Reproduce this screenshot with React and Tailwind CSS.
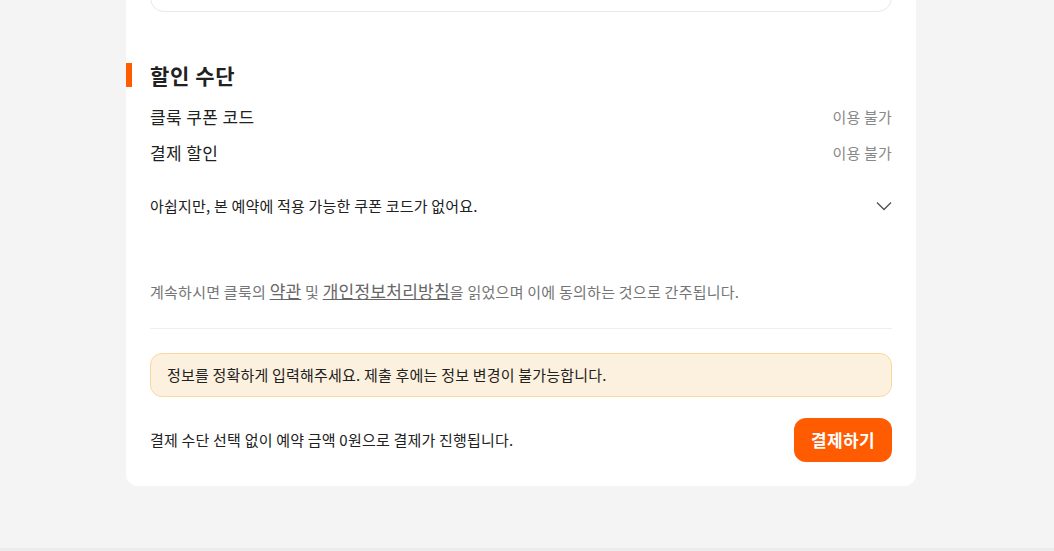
export default function App() {
  const font = { fontFamily: '"Noto Sans CJK KR", "Noto Sans", sans-serif' };
  return (
    <div className="min-h-[551px] bg-[#f4f4f4]" style={font}>
      <div className="ml-[126px] w-[790px] bg-white rounded-b-[12px] px-[24px] pb-[24px] overflow-hidden">
        <div className="-mt-[40px] h-[52px] rounded-[14px] border border-[#e8e8e8]"></div>

        <div className="mt-[51px] -ml-[24px] flex items-center h-[24px]">
          <div className="w-[6px] h-[24px] bg-[#ff5b00]"></div>
          <h2 className="ml-[18px] text-[21px] tracking-[0.6px] leading-[23px] font-bold text-[#212121]">할인 수단</h2>
        </div>

        <div className="mt-[18px] flex items-center justify-between h-[24px]">
          <span className="text-[17px] tracking-[0.4px] leading-[24px] text-[#212121]">클룩 쿠폰 코드</span>
          <span className="text-[15px] tracking-[0.2px] leading-[20px] text-[#888888]">이용 불가</span>
        </div>
        <div className="mt-[12px] flex items-center justify-between h-[24px]">
          <span className="text-[17px] tracking-[0.4px] leading-[24px] text-[#212121]">결제 할인</span>
          <span className="text-[15px] tracking-[0.2px] leading-[20px] text-[#888888]">이용 불가</span>
        </div>

        <div className="mt-[31px] flex items-center justify-between h-[20px]">
          <span className="text-[15px] tracking-[0.2px] leading-[20px] text-[#212121]">아쉽지만, 본 예약에 적용 가능한 쿠폰 코드가 없어요.</span>
          <svg width="16" height="16" viewBox="0 0 16 16" fill="none">
            <path d="M1 4.5L8 11.5L15 4.5" stroke="#555555" strokeWidth="1.4" />
          </svg>
        </div>

        <p className="mt-[63px] text-[15px] tracking-[0.25px] leading-[24px] text-[#757575]">
          계속하시면 클룩의 <a className="text-[17px] underline text-[#666666]">약관</a> 및{" "}
          <a className="text-[17px] underline text-[#666666]">개인정보처리방침</a>을 읽었으며 이에 동의하는 것으로 간주됩니다.
        </p>

        <div className="mt-[24px] h-px bg-[#eeeeee]"></div>

        <div className="mt-[24px] h-[44px] rounded-[12px] border border-[#f8d89c] bg-[#fcf1de] flex items-center px-[16px]">
          <span className="text-[15px] tracking-[0.2px] leading-[20px] text-[#212121]">정보를 정확하게 입력해주세요. 제출 후에는 정보 변경이 불가능합니다.</span>
        </div>

        <div className="mt-[21px] flex items-center justify-between">
          <span className="text-[15px] tracking-[0.2px] leading-[20px] text-[#212121]">결제 수단 선택 없이 예약 금액 0원으로 결제가 진행됩니다.</span>
          <button className="w-[98px] h-[44px] rounded-[12px] bg-[#ff5b00] text-white text-[17px] tracking-[0.3px] font-bold">결제하기</button>
        </div>
      </div>
      <div className="h-[62px]"></div>
      <div className="h-[3px] bg-[#ececec]"></div>
    </div>
  );
}
